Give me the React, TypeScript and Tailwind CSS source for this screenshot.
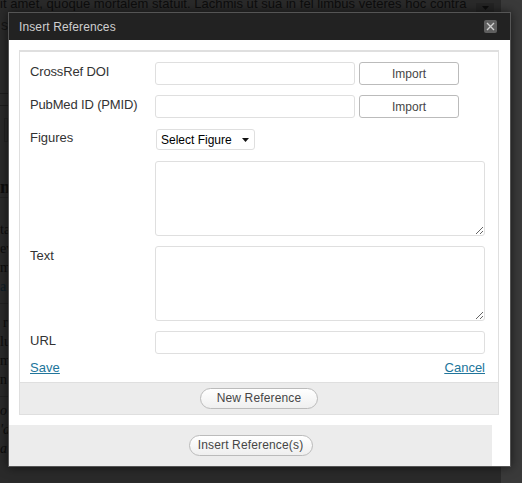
import React from "react";

const serif = "font-['Liberation_Serif',serif]";

// page behind the overlay, only its edges show around the dialog
function PageBehind() {
  return (
    <div className="h-[483px] w-[522px] overflow-hidden bg-[#2a2a2a] text-[#0d0d0d]">
      <div className="flex h-[483px]">
        <div className="flex w-[501px] flex-col">
          <div className="flex h-[13px] -mt-[5px]">
            <p className="w-[476px] whitespace-nowrap text-[13px] leading-[18px] tracking-[0.04px] font-['Liberation_Sans',sans-serif]">
              it amet, quoque mortalem statuit. Lachmis ut sua in fel limbus veteres hoc contra
            </p>
            <div className="mt-[8px] flex h-[10px] w-[18px] items-center justify-center bg-[#242424]">
              <svg width="7" height="4" viewBox="0 0 7 4" fill="#0d0d0d">
                <path d="M0 0h7L3.5 4z" />
              </svg>
            </div>
          </div>
          <p className="mt-[8px] h-[18px] text-[14px] leading-[18px] font-['Liberation_Sans',sans-serif] text-[#141414] pl-[1px]">
            s
          </p>
          <div className="mt-[59px] h-[13px] border-y border-[#1d1d1d]" />
          <div className="mt-[12px] ml-[4px] h-[24px] w-[4px] border border-[#222]" />
          <p className={`mt-[36px] h-[20px] border-b border-[#222] text-[18px] font-bold leading-[18px] ${serif}`}>m</p>
          <div className={`mt-[22px] text-[14px] leading-[19px] ${serif}`}>
            <p>ta</p>
            <p>ev</p>
            <p>m</p>
            <p className="text-[#0d1c26]">a s</p>
          </div>
          <div className="mt-[7px] border-t border-[#222]" />
          <div className={`mt-[9px] text-[14px] leading-[19px] ${serif}`}>
            <p className="pl-[3px]">r</p>
            <p>lu</p>
            <p>m</p>
            <p>n c</p>
          </div>
          <div className="mt-[7px] border-t border-[#222]" />
          <div className={`mt-[4px] text-[14px] italic leading-[19px] ${serif}`}>
            <p>o</p>
            <p>'d</p>
            <p>a</p>
          </div>
        </div>
        <div className="w-[21px] bg-[#3a3a3a]" />
      </div>
    </div>
  );
}

function Field({ className = "" }: { className?: string }) {
  return (
    <input
      type="text"
      className={`block h-[23px] rounded-[3px] border border-[#dfdfdf] bg-white ${className}`}
    />
  );
}

function ImportRow({ label }: { label: string }) {
  return (
    <div className="flex h-[23px]">
      <label className="w-[125px] text-[13px] leading-[19px] tracking-[-0.15px]">{label}</label>
      <Field className="w-[200px]" />
      <button className="ml-[4px] h-[23px] w-[100px] rounded-[3px] border border-[#bbbbbb] bg-white text-[12px] text-[#464646]">
        Import
      </button>
    </div>
  );
}

function PillButton({ children, className = "" }: { children: React.ReactNode; className?: string }) {
  return (
    <button
      className={`h-[21px] rounded-[11px] border border-[#bbbbbb] bg-gradient-to-b from-white to-[#efefef] text-[12px] leading-[19px] tracking-[0.15px] text-[#464646] ${className}`}
    >
      {children}
    </button>
  );
}

export default function App() {
  return (
    <div className="relative h-[483px] w-[522px] overflow-hidden font-['Liberation_Sans',sans-serif]">
      <PageBehind />

      <div className="absolute left-[8px] top-[12px] flex h-[455px] w-[503px] flex-col border border-[#555555] bg-white shadow-[0_0_10px_rgba(0,0,0,0.6)]">
        <div className="flex h-[27px] shrink-0 items-center justify-between bg-[#222222] pl-[10px] pr-[13px]">
          <span className="text-[12px] tracking-[0.12px] text-[#cfcfcf]">Insert References</span>
          <span className="flex h-[13px] w-[13px] items-center justify-center rounded-[2px] bg-[#5f5f5f]">
            <svg width="9" height="9" viewBox="0 0 9 9" fill="none" stroke="#cfcfcf" strokeWidth="1.4">
              <path d="M1 1l7 7M8 1L1 8" />
            </svg>
          </span>
        </div>

        <div className="ml-[10px] mt-[10px] w-[480px] border border-t-2 border-[#dfdfdf] text-[#333333]">
          <div className="flex flex-col pl-[10px] pr-[13px] pt-[10px]">
            <ImportRow label="CrossRef DOI" />
            <div className="mt-[10px]">
              <ImportRow label="PubMed ID (PMID)" />
            </div>
            <div className="mt-[11px] flex h-[21px]">
              <label className="w-[125px] text-[13px] leading-[17px]">Figures</label>
              <div className="ml-[1px] flex h-[21px] w-[99px] items-center rounded-[3px] border border-[#dfdfdf] bg-white pl-[4px] text-[12px] text-black">
                <span>Select Figure</span>
                <svg className="ml-[10px]" width="7" height="4" viewBox="0 0 7 4" fill="#111111">
                  <path d="M0 0h7L3.5 4z" />
                </svg>
              </div>
            </div>
            <textarea className="ml-[125px] mt-[11px] block h-[75px] w-[330px] rounded-[3px] border border-[#dfdfdf] bg-white" />
            <div className="mt-[10px] flex">
              <label className="w-[125px] text-[13px] leading-[19px]">Text</label>
              <textarea className="block h-[75px] w-[330px] rounded-[3px] border border-[#dfdfdf] bg-white" />
            </div>
            <div className="mt-[10px] flex">
              <label className="w-[125px] text-[13px] leading-[19px]">URL</label>
              <Field className="w-[330px]" />
            </div>
            <div className="mt-[6px] flex h-[22px] justify-between text-[13px] leading-[16px] text-[#21759b] underline">
              <a href="#save">Save</a>
              <a href="#cancel">Cancel</a>
            </div>
          </div>
          <div className="flex h-[32px] items-center justify-center border-t border-[#dfdfdf] bg-[#ececec]">
            <PillButton className="w-[118px]">New Reference</PillButton>
          </div>
        </div>

        <div className="mt-[10px] flex min-h-0 w-[483px] flex-1 items-start justify-center bg-[#ececec] pt-[10px]">
          <PillButton className="w-[124px]">Insert Reference(s)</PillButton>
        </div>
      </div>
    </div>
  );
}
